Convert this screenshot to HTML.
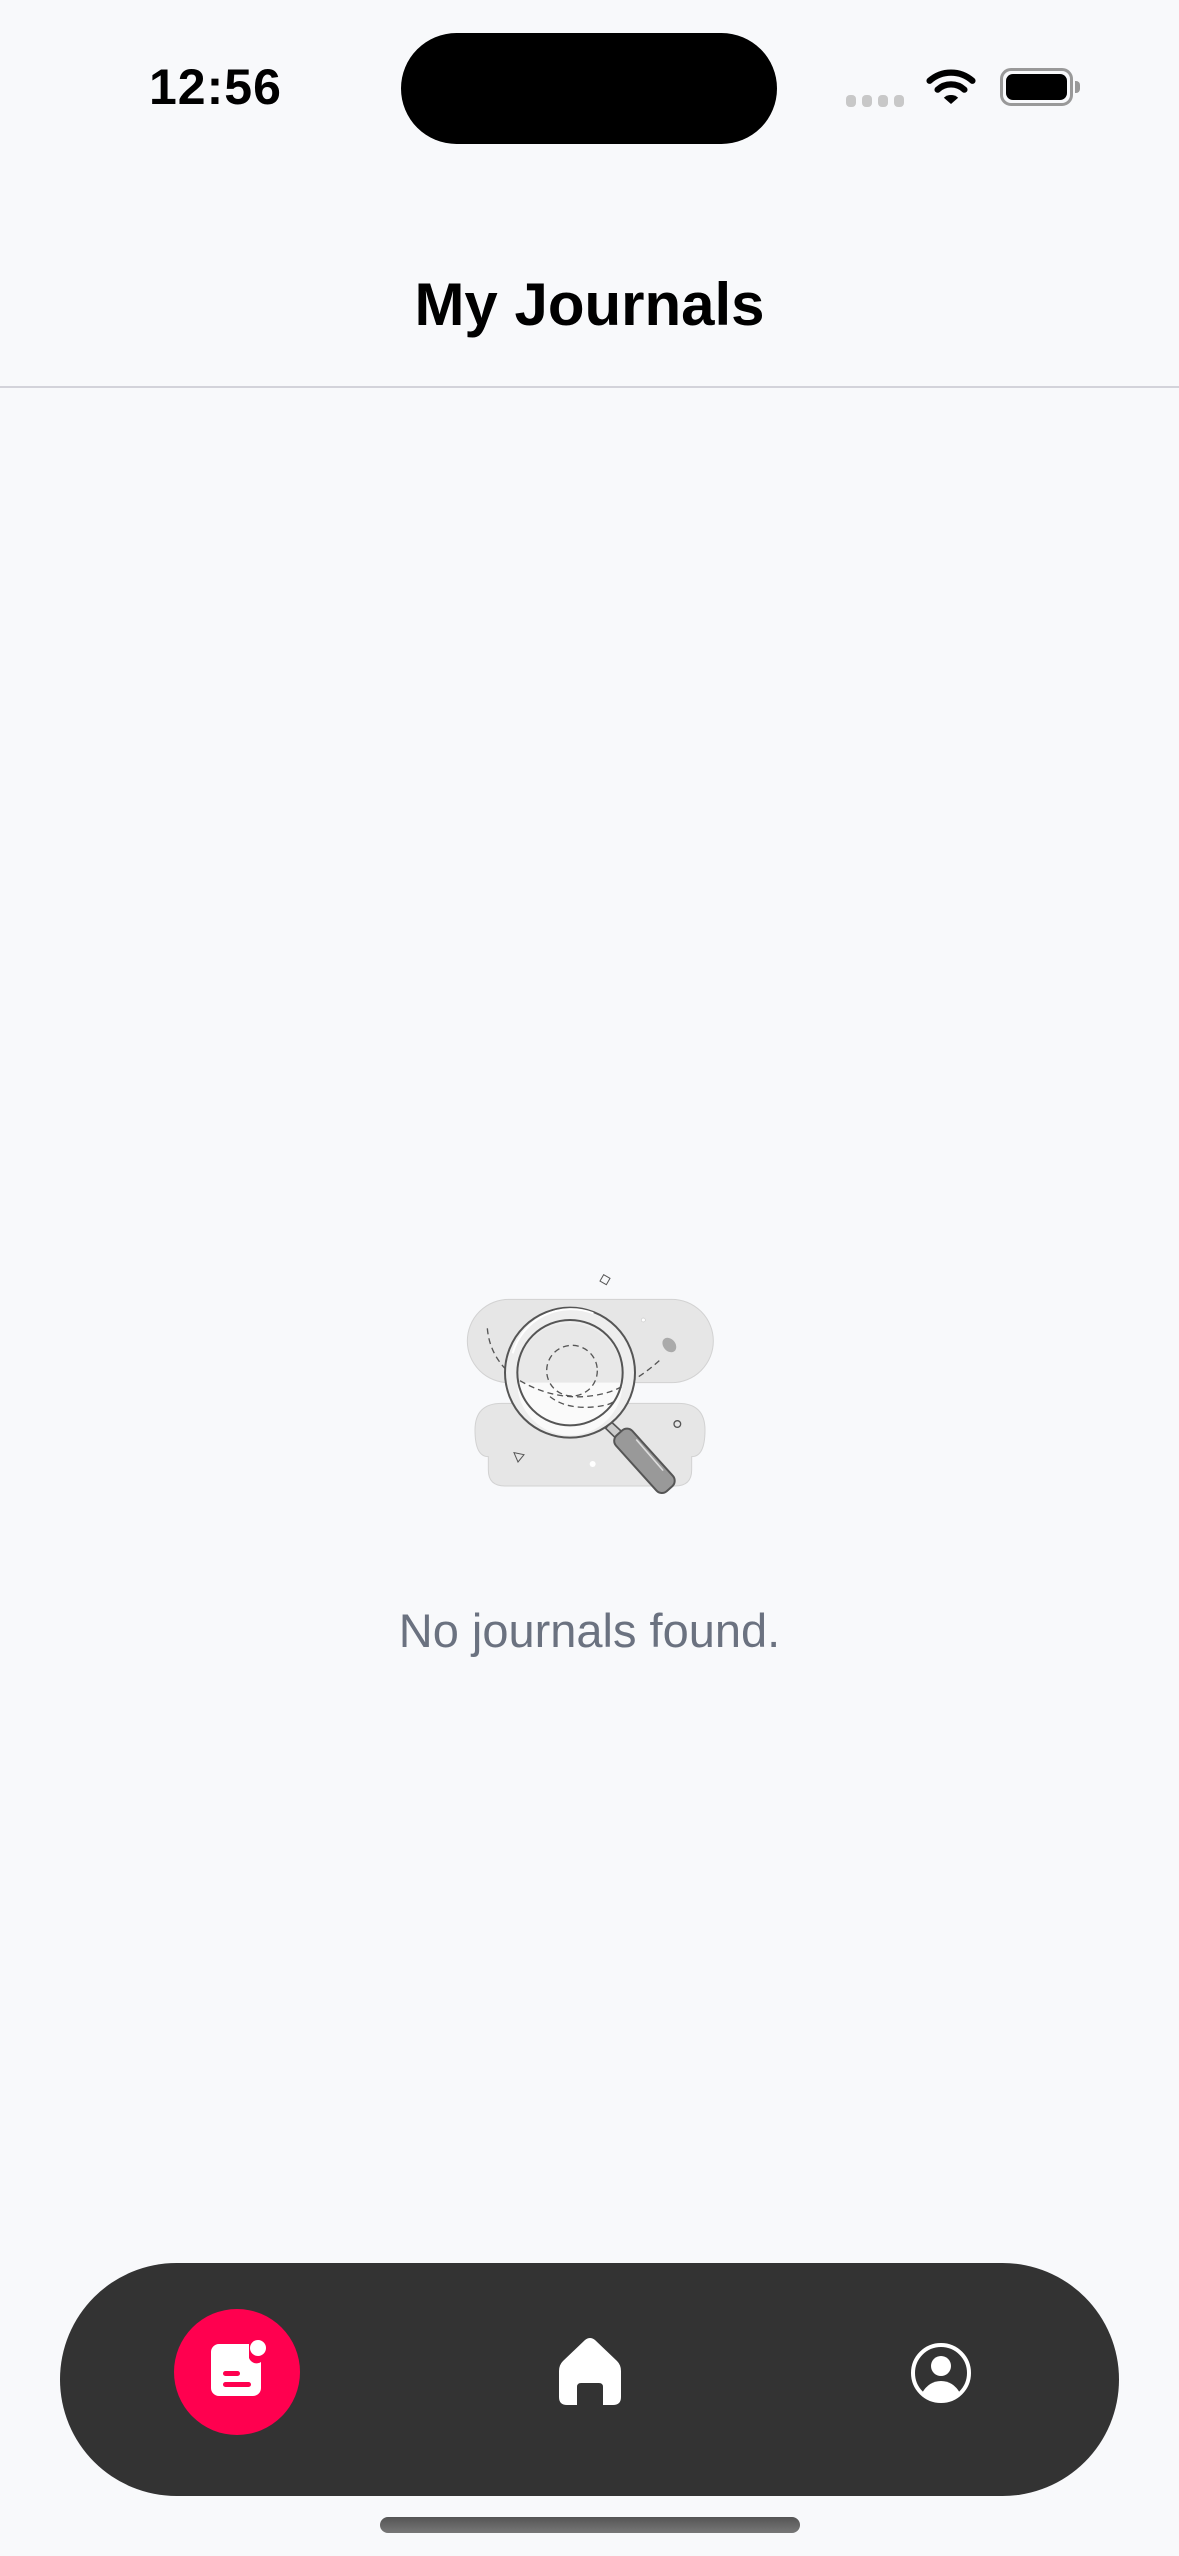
<!DOCTYPE html>
<html><head><meta charset="utf-8"><style>
*{margin:0;padding:0;box-sizing:border-box}
body{width:1179px;height:2556px;background:#f8f9fb;position:relative;overflow:hidden;font-family:"Liberation Sans",sans-serif}
.abs{position:absolute}
</style></head><body>
<div class="abs" style="left:149px;top:58px;font-size:50px;font-weight:700;color:#000;letter-spacing:1px">12:56</div>
<div class="abs" style="left:401px;top:33px;width:376px;height:111px;border-radius:56px;background:#000"></div>
<div class="abs" style="left:846px;top:95px;width:10px;height:12px;border-radius:4px;background:#c8c8c8"></div>
<div class="abs" style="left:862px;top:95px;width:10px;height:12px;border-radius:4px;background:#c8c8c8"></div>
<div class="abs" style="left:878px;top:95px;width:10px;height:12px;border-radius:4px;background:#c8c8c8"></div>
<div class="abs" style="left:894px;top:95px;width:10px;height:12px;border-radius:4px;background:#c8c8c8"></div>
<svg class="abs" style="left:926px;top:68px" width="50" height="38" viewBox="0 0 56 42">
<path d="M4 14 A36 36 0 0 1 52 14" stroke="#000" stroke-width="7" fill="none" stroke-linecap="round"/>
<path d="M13 24 A22 22 0 0 1 43 24" stroke="#000" stroke-width="7" fill="none" stroke-linecap="round"/>
<path d="M20 33 L28 40 L36 33 A12 12 0 0 0 20 33Z" fill="#000"/>
</svg>
<div class="abs" style="left:1000px;top:68px;width:73px;height:38px;border-radius:11px;border:3px solid #999"></div>
<div class="abs" style="left:1006px;top:74px;width:61px;height:26px;border-radius:7px;background:#000"></div>
<div class="abs" style="left:1075px;top:81px;width:5px;height:12px;border-radius:0 4px 4px 0;background:#999"></div>
<div class="abs" style="left:0;top:270px;width:1179px;text-align:center;font-size:60px;font-weight:700;color:#000">My Journals</div>
<div class="abs" style="left:0;top:386px;width:1179px;height:2px;background:#d3d3da"></div>
<svg class="abs" style="left:440px;top:1250px" width="300" height="260" viewBox="0 0 900 780">
<rect x="82" y="148" width="738" height="250" rx="125" fill="#e6e6e6" stroke="#d2d2d2" stroke-width="3"/>
<path d="M105 540 Q105 460 185 460 L715 460 Q795 460 795 540 Q795 620 755 620 L755 660 Q755 708 705 708 L195 708 Q145 708 145 660 L145 620 Q105 620 105 540Z" fill="#e6e6e6" stroke="#d2d2d2" stroke-width="3"/>
<rect x="484" y="78" width="22" height="22" transform="rotate(30 495 89)" fill="none" stroke="#555" stroke-width="3"/>
<circle cx="610" cy="210" r="6" fill="#fff" stroke="#ccc" stroke-width="2"/>
<circle cx="712" cy="522" r="10" fill="none" stroke="#555" stroke-width="4"/>
<path d="M222 608 L252 614 L234 636Z" fill="none" stroke="#555" stroke-width="3"/>
<circle cx="458" cy="642" r="9" fill="#fff"/>
<ellipse cx="688" cy="285" rx="18" ry="24" transform="rotate(-40 688 285)" fill="#aaa"/>
<path d="M142 235 Q150 330 235 390 Q330 445 430 440 Q550 430 660 330" stroke="#555" stroke-width="4" fill="none" stroke-dasharray="18 12"/>
<path d="M513 515 L553 552 L535 572 L497 535Z" fill="#ccc" stroke="#555" stroke-width="5"/>
<rect x="580" y="520" width="66" height="225" rx="22" transform="rotate(-42 613 632)" fill="#999" stroke="#555" stroke-width="6"/>
<path d="M590 570 L668 660" stroke="#ddd" stroke-width="5" stroke-linecap="round"/>
<circle cx="390" cy="368" r="195" fill="#eee" stroke="#555" stroke-width="6"/>
<path d="M232 398 L546 398 L546 360 A158 158 0 0 0 232 360Z" fill="#e8e8e8"/>
<path d="M232 398 L548 398 A158 158 0 0 1 232 398Z" fill="#fafafa"/>
<path d="M240 392 Q330 445 430 440 Q500 435 545 410" stroke="#555" stroke-width="4" fill="none" stroke-dasharray="18 12"/>
<circle cx="396" cy="362" r="76" fill="none" stroke="#555" stroke-width="4" stroke-dasharray="18 12"/>
<path d="M330 440 Q380 480 470 470 Q510 465 520 455" stroke="#555" stroke-width="4" fill="none" stroke-dasharray="18 12"/>
<circle cx="390" cy="368" r="158" fill="none" stroke="#555" stroke-width="6"/>
<path d="M218 310 A182 182 0 0 1 460 190" stroke="#fff" stroke-width="6" fill="none"/>
</svg>
<div class="abs" style="left:0;top:1603px;width:1179px;text-align:center;font-size:47px;color:#6b7280">No journals found.</div>
<div class="abs" style="left:60px;top:2263px;width:1059px;height:233px;border-radius:117px;background:#333"></div>
<div class="abs" style="left:174px;top:2309px;width:126px;height:126px;border-radius:50%;background:#ff004f"></div>
<svg class="abs" style="left:205px;top:2338px" width="64" height="64" viewBox="0 0 64 64">
<path d="M14 6 H44 V20 A8 8 0 0 0 56 24 V50 A8 8 0 0 1 48 58 H14 A8 8 0 0 1 6 50 V14 A8 8 0 0 1 14 6Z" fill="#fff"/>
<circle cx="53" cy="10" r="8" fill="#fff"/>
<rect x="18" y="33" width="17" height="5" rx="2.5" fill="#ff004f"/>
<rect x="18" y="44" width="28" height="5" rx="2.5" fill="#ff004f"/>
</svg>
<svg class="abs" style="left:557px;top:2337px" width="66" height="70" viewBox="0 0 66 70">
<path d="M28 3 Q33 -1 38 3 L60 24 Q64 28 64 34 V60 Q64 68 56 68 H46 V50 Q46 46 42 46 H24 Q20 46 20 50 V68 H10 Q2 68 2 60 V34 Q2 28 6 24Z" fill="#fff"/>
</svg>
<svg class="abs" style="left:909px;top:2341px" width="64" height="64" viewBox="0 0 64 64">
<circle cx="32" cy="32" r="28" fill="none" stroke="#fff" stroke-width="4"/>
<circle cx="32" cy="25" r="10" fill="#fff"/>
<path d="M13 52 Q20 40 32 40 Q44 40 51 52 Q42 60 32 60 Q22 60 13 52Z" fill="#fff"/>
</svg>
<div class="abs" style="left:380px;top:2517px;width:420px;height:16px;border-radius:8px;background:linear-gradient(#555,#777)"></div>
</body></html>
